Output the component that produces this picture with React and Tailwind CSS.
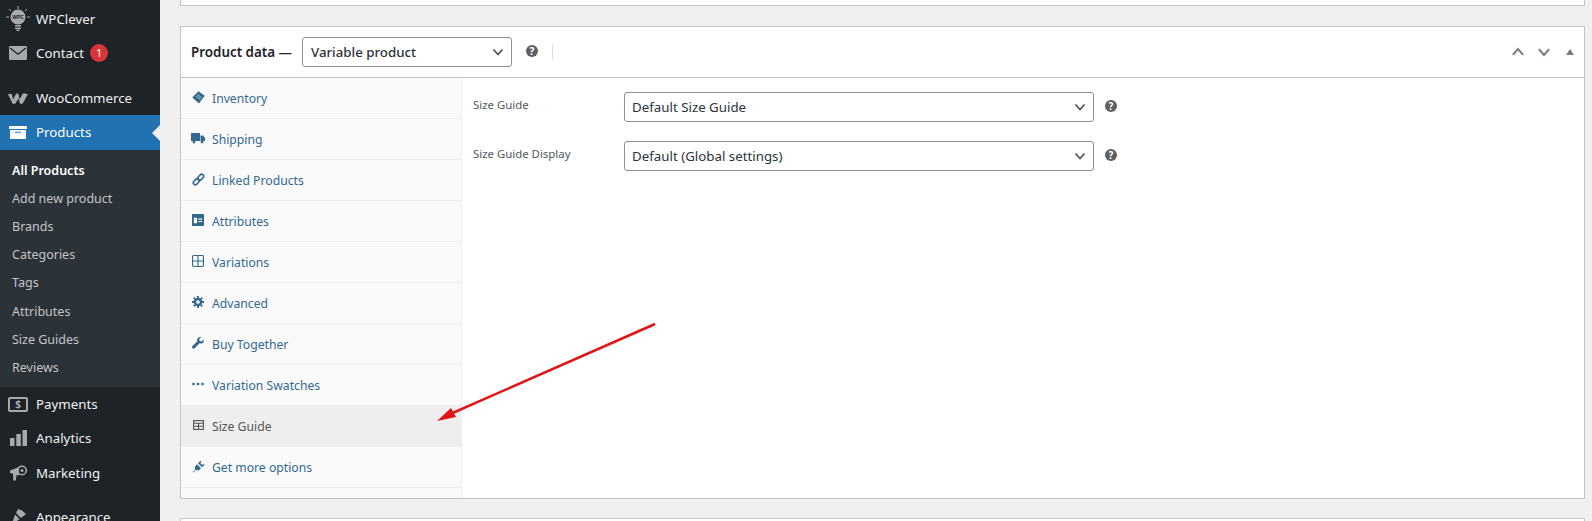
import React from "react";

const Svg = ({ size = 20, vb = "0 0 20 20", cls = "", children }) => (
  <svg width={size} height={size} viewBox={vb} className={cls} fill="currentColor">{children}</svg>
);

const Chevron = ({ w = 14, sw = 1.8, cls = "" }) => (
  <svg width={w} height={w} viewBox="0 0 14 14" fill="none" stroke="currentColor" strokeWidth={sw} className={cls}>
    <path d="M2.5 4.5 7 9.5l4.5-5" />
  </svg>
);

const Help = () => (
  <span className="flex h-[12px] w-[12px] -translate-y-[1px] items-center justify-center rounded-full bg-[#5f5f5f] text-[10px] leading-none font-bold text-white">?</span>
);

const Bulb = () => (
  <svg width="24" height="26" viewBox="0 0 24 26" className="text-[#a7aaad]">
    <g stroke="currentColor" strokeWidth="1">
      <path d="M12 0v3M3 3l2 2M21 3l-2 2M0 11h3M24 11h-3" />
    </g>
    <circle cx="12" cy="11" r="7.5" fill="currentColor" />
    <text x="12" y="12.8" textAnchor="middle" fontSize="5" fontWeight="700" fill="#1d2327" fontFamily="Liberation Sans, sans-serif">WPC</text>
    <path d="M9 19h6v1.6H9zM9 21.4h6V23H9zM10.5 23.6h3V25h-3z" fill="currentColor" />
  </svg>
);

const Mail = () => (
  <svg width="18" height="14" viewBox="0 0 18 14" className="text-[#a7aaad]">
    <rect width="18" height="14" rx="1" fill="currentColor" />
    <path d="M1 2l8 6.2L17 2" fill="none" stroke="#1d2327" strokeWidth="1.3" />
  </svg>
);

const Woo = () => (
  <svg width="20" height="11" viewBox="0 0 20 11" fill="#a7aaad">
    <path d="M0 1.500C1 .5 3 .5 4 1.500l1 5 3-5.500c1-.8 2.300-.5 2.600.6l.8 4.900L14.500 1c.8-1 3-1 3.500 0h2L15 10c-1 1.300-2.700 1.200-3.200 0L10.500 5.500 7.500 10.200c-1 1.200-2.700 1-3.200-.2z" />
  </svg>
);

const Box = () => (
  <svg width="18" height="13" viewBox="0 0 18 13" fill="#fff">
    <rect width="18" height="3" rx="0.5" />
    <path d="M1 4h16v9H1zM6 5.800v1h6v-1z" fillRule="evenodd" />
  </svg>
);

const Payments = () => (
  <span className="flex h-[15px] w-[20px] items-center justify-center rounded-[2px] border-2 border-[#a7aaad] text-[10px] leading-none font-bold text-[#a7aaad]">$</span>
);

const Bars = () => (
  <svg width="17" height="16" viewBox="0 0 17 16" fill="#a7aaad">
    <rect x="0" y="8" width="4.500" height="8" />
    <rect x="6.300" y="4" width="4.500" height="12" />
    <rect x="12.500" y="0" width="4.500" height="16" />
  </svg>
);

const Megaphone = () => (
  <svg width="18" height="18" viewBox="0 0 18 18" fill="#a7aaad">
    <path d="M1 6.500 10 3v8.500l-2.300-.8-.9 5.800H4.300l-.3-6.700L1 9z" />
    <circle cx="13" cy="6.500" r="4.300" fill="none" stroke="#a7aaad" strokeWidth="1.600" />
    <circle cx="13" cy="6.500" r="1.500" />
  </svg>
);

const Brush = () => (
  <svg width="18" height="18" viewBox="0 0 18 18" fill="#a7aaad">
    <path d="M9 1l4 1.500L17 6l-5 4-5-5zM6 6.500l4.500 4.500L7 14l-3.500 3.500-2-1.500L4 12.500z" />
  </svg>
);

const Tag = () => (
  <Svg size={13} vb="0 0 14 14"><path d="M7 .3 13.700 5 7.500 13.500.3 7z" /><path d="M6 4l4.500 3.500M4.500 5.500 9 9" stroke="#fafafa" strokeWidth=".7" /></Svg>
);
const Truck = () => (
  <Svg size={14} vb="0 0 14 12"><path d="M0 1h9v8H0zM9.500 3.500h2.500L14 6v3h-4.500z" /><circle cx="3" cy="10" r="1.400" /><circle cx="11" cy="10" r="1.400" /></Svg>
);
const LinkIcon = () => (
  <svg width="13" height="13" viewBox="0 0 14 14" fill="none" stroke="currentColor" strokeWidth="1.700">
    <rect x="-3.600" y="-2.200" width="7.200" height="4.400" rx="2.200" transform="translate(4.600 9.400) rotate(-45)" />
    <rect x="-3.600" y="-2.200" width="7.200" height="4.400" rx="2.200" transform="translate(9.400 4.600) rotate(-45)" />
  </svg>
);
const Attr = () => (
  <Svg size={12} vb="0 0 13 13"><path fillRule="evenodd" d="M1 0h11a1 1 0 0 1 1 1v11a1 1 0 0 1-1 1H1a1 1 0 0 1-1-1V1a1 1 0 0 1 1-1zm1 4v6h3.500V4zm5 1v1.200h4V5zm0 2.500v1.200h4V7.500z" /></Svg>
);
const Grid4 = () => (
  <svg width="12" height="12" viewBox="0 0 13 13" fill="none" stroke="currentColor" strokeWidth="1.200">
    <rect x=".6" y=".6" width="11.800" height="11.800" rx="1" /><path d="M6.500 .6v11.800M.6 6.500h11.800" />
  </svg>
);
const Gear = () => (
  <svg width="12" height="12" viewBox="0 0 13 13" fill="none" stroke="currentColor">
    <circle cx="6.500" cy="6.500" r="3.300" strokeWidth="2.600" />
    <path d="M6.500 0v13M0 6.500h13M1.900 1.900l9.200 9.200M11.100 1.900l-9.200 9.200" strokeWidth="2" strokeDasharray="2.200 8.600" />
  </svg>
);
const Wrench = () => (
  <Svg size={12} vb="0 0 13 13"><path d="M12.600 2.800 10.500 4.900 8.300 4.300 7.800 2.200 9.900.2C8.200-.4 6.300.5 5.700 2.200c-.3.800-.2 1.600.1 2.300L.5 9.800c-.7.700-.7 1.700 0 2.400.7.700 1.700.7 2.400 0l5.300-5.300c1.600.7 3.500 0 4.200-1.600.4-.8.400-1.700.2-2.500z" /></Svg>
);
const Dots = () => (
  <svg width="12" height="4" viewBox="0 0 12 4" fill="currentColor"><circle cx="1.500" cy="2" r="1.300" /><circle cx="6" cy="2" r="1.300" /><circle cx="10.500" cy="2" r="1.300" /></svg>
);
const TableIcon = () => (
  <svg width="11" height="10" viewBox="0 0 11 10" fill="none" stroke="currentColor" strokeWidth="1.100">
    <rect x=".6" y=".6" width="9.800" height="8.800" /><path d="M.6 3.300h9.800M.6 6.300h9.800M5.500 3.300v6.100" />
  </svg>
);
const Plug = () => (
  <Svg size={13} vb="0 0 13 13"><path d="M1 12l2.500-2.700C2.600 8 2.800 6.400 3.800 5.400L5 4.200 9 8.200 7.800 9.400c-1 1-2.600 1.200-3.900.3L1.400 12.500zM7 2.200 8.500.8l1 1L8 3.200zM10 5.200l1.500-1.500 1 1L11 6.200zM6 3.200l1.200-1.200 4 4L10 7.200z" /></Svg>
);

const menuTop = [
  { label: "WPClever", icon: <Bulb /> },
  { label: "Contact", icon: <Mail />, badge: "1" },
];

const subs = ["All Products", "Add new product", "Brands", "Categories", "Tags", "Attributes", "Size Guides", "Reviews"];

const tabs = [
  ["Inventory", <Tag />],
  ["Shipping", <Truck />],
  ["Linked Products", <LinkIcon />],
  ["Attributes", <Attr />],
  ["Variations", <Grid4 />],
  ["Advanced", <Gear />],
  ["Buy Together", <Wrench />],
  ["Variation Swatches", <Dots />],
  ["Size Guide", <TableIcon />, true],
  ["Get more options", <Plug />],
];

const MenuItem = ({ icon, label, badge }) => (
  <div className="flex h-[34px] shrink-0 items-center text-[13.300px] text-[#f0f0f1]">
    <span className="flex w-[36px] shrink-0 items-center justify-center">{icon}</span>
    <span className="pt-[2px]">{label}</span>
    {badge && (
      <span className="ml-[6px] flex h-[18px] w-[18px] items-center justify-center rounded-full bg-[#d63638] text-[11px] text-white">{badge}</span>
    )}
  </div>
);

const Field = ({ label, value }) => (
  <div className="flex items-center">
    <span className="w-[162px] shrink-0 pb-[5px] pl-[11px] text-[11.400px] text-[#50575e]">{label}</span>
    <div className="flex h-[30px] w-[470px] shrink-0 items-center justify-between rounded-[3px] border border-[#8c8f94] pr-[6px] pl-[7px] text-[13.300px] text-[#2c3338]">
      <span className="pt-[2px]">{value}</span>
      <Chevron cls="text-[#50575e]" />
    </div>
    <span className="ml-[11px]"><Help /></span>
  </div>
);

export default function App() {
  return (
    <div className="relative flex h-[521px] w-[1592px] overflow-hidden bg-[#f0f0f1] font-['Noto_Sans','Open_Sans',sans-serif]">
      <aside className="flex h-full w-[160px] shrink-0 flex-col bg-[#1d2327] pt-[2px]">
        {menuTop.map((m) => <MenuItem key={m.label} {...m} />)}
        <div className="mt-[11px] shrink-0"><MenuItem icon={<Woo />} label="WooCommerce" /></div>
        <div className="flex h-[35px] shrink-0 items-center bg-[#2271b1] text-[13.300px] text-white">
          <span className="flex w-[36px] shrink-0 items-center justify-center"><Box /></span>
          <span>Products</span>
          <span className="ml-auto h-0 w-0 border-y-[8px] border-r-[8px] border-y-transparent border-r-[#f0f0f1]" />
        </div>
        <div className="flex h-[237px] shrink-0 flex-col bg-[#2c3338] pt-[7px]">
          {subs.map((s, i) => (
            <div key={s} className={`flex h-[28.200px] shrink-0 items-center pl-[12px] text-[12.500px] ${i === 0 ? "font-semibold text-white" : "text-[#c3c4c7]"}`}>{s}</div>
          ))}
        </div>
        <MenuItem icon={<Payments />} label="Payments" />
        <MenuItem icon={<Bars />} label="Analytics" />
        <div className="shrink-0 pt-[1px]"><MenuItem icon={<Megaphone />} label="Marketing" /></div>
        <div className="mt-[10px] shrink-0"><MenuItem icon={<Brush />} label="Appearance" /></div>
      </aside>

      <main className="ml-[20px] flex min-w-0 flex-1 flex-col pr-[7px]">
        <div className="h-[6px] shrink-0 border-x border-b border-[#c3c4c7] bg-white" />
        <section className="mt-[20px] flex h-[473px] shrink-0 flex-col border border-[#c3c4c7] bg-white">
          <header className="flex h-[51px] shrink-0 items-center border-b border-[#c3c4c7] pl-[10px]">
            <span className="text-[13.400px] font-semibold text-[#1d2327]">Product data —</span>
            <div className="ml-[10px] flex h-[30px] w-[210px] items-center justify-between rounded-[3px] border border-[#8c8f94] pr-[6px] pl-[8px] text-[13.300px] font-medium text-[#2c3338]">
              <span className="pt-[2px]">Variable product</span>
              <Chevron cls="text-[#50575e]" />
            </div>
            <span className="ml-[14px]"><Help /></span>
            <span className="ml-[14px] h-[16px] w-px bg-[#dcdcde]" />
            <div className="ml-auto flex items-center gap-[10px] pr-[6px] text-[#787c82]">
              <Chevron w={16} sw={1.9} cls="rotate-180" />
              <Chevron w={16} sw={1.9} />
              <span className="mx-[4px] h-0 w-0 border-x-[4px] border-b-[6px] border-x-transparent border-b-[#787c82]" />
            </div>
          </header>
          <div className="flex min-h-0 flex-1">
            <nav className="h-full w-[281px] shrink-0 border-r border-[#eeeeee] bg-[#fafafa]">
              {tabs.map(([label, icon, active]) => (
                <div key={label} className={`flex h-[41px] items-center border-b border-[#eeeeee] text-[12.200px] ${active ? "bg-[#eeeeee] text-[#555555]" : "text-[#33688f]"}`}>
                  <span className="flex w-[31px] shrink-0 -translate-y-[1px] items-center justify-center pl-[3px]">{icon}</span>
                  <span className="pt-[2px]">{label}</span>
                </div>
              ))}
            </nav>
            <div className="flex flex-1 flex-col gap-[19px] pt-[14px]">
              <Field label="Size Guide" value="Default Size Guide" />
              <Field label="Size Guide Display" value="Default (Global settings)" />
            </div>
          </div>
        </section>
        <div className="mt-[19px] h-[10px] shrink-0 border-x border-t border-[#c3c4c7] bg-white" />
      </main>

      <svg className="pointer-events-none absolute top-0 left-0" width="1592" height="521" fill="none">
        <path d="M655 324 448 415" stroke="#e01414" strokeWidth="2.500" />
        <path d="M437 421 451 408 456 417z" fill="#e01414" />
      </svg>
    </div>
  );
}
